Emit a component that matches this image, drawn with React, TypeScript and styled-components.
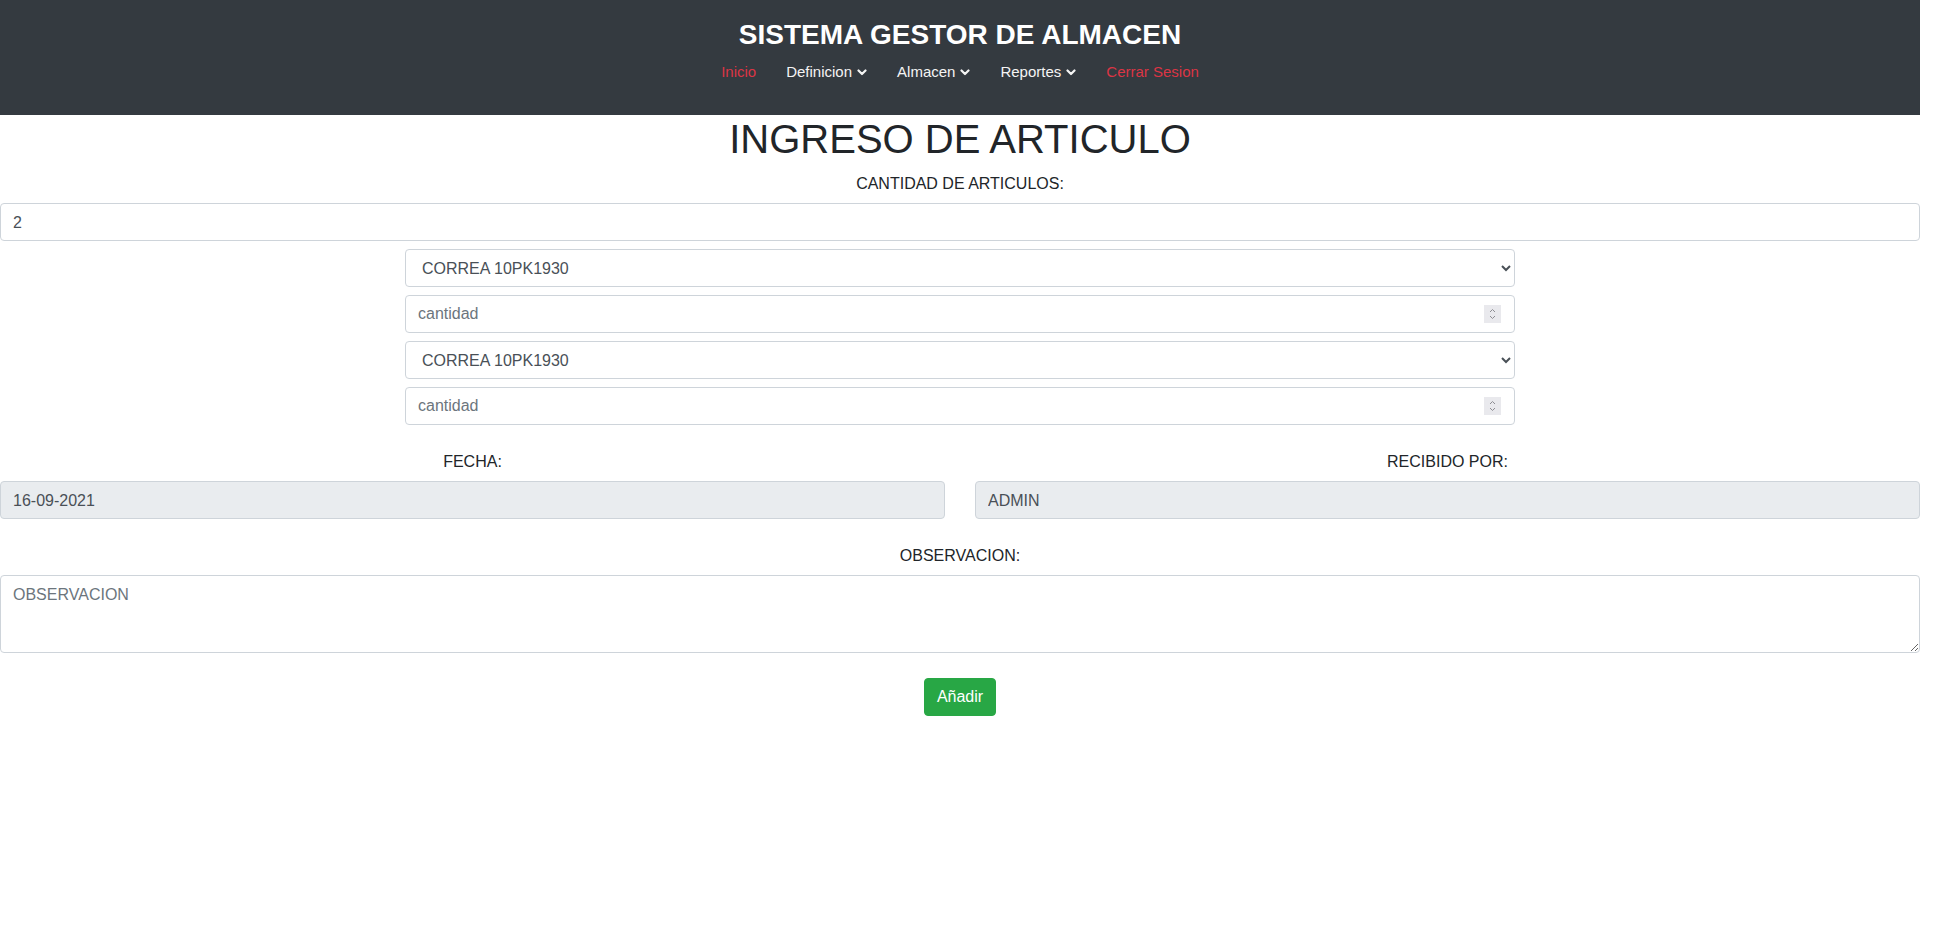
import React from "react";
import styled, { createGlobalStyle } from "styled-components";

const GlobalStyle = createGlobalStyle`
  * { box-sizing: border-box; }
  html, body { margin: 0; padding: 0; background: #fff; }
  body {
    font-family: "Liberation Sans", Arial, sans-serif;
    font-size: 16px;
    line-height: 1.5;
    color: #212529;
  }
  #root { width: 1920px; }
  input[type="number"]::-webkit-inner-spin-button,
  input[type="number"]::-webkit-outer-spin-button {
    -webkit-appearance: none;
    margin: 0;
  }
  input[type="number"] { -moz-appearance: textfield; }
`;

const Header = styled.header`
  height: 115px;
  background: #343a40;
  display: flex;
  flex-direction: column;
  align-items: center;
  padding-top: 18px;
`;

const Brand = styled.h2`
  margin: 0;
  font-size: 28px;
  font-weight: 700;
  line-height: 1.2;
  color: #fff;
`;

const Nav = styled.nav`
  display: flex;
  align-items: center;
  margin-top: 1px;
`;

const NavLink = styled.a<{ $danger?: boolean }>`
  display: flex;
  align-items: center;
  padding: 8px 15px;
  font-size: 15px;
  line-height: 1.5;
  color: ${(p) => (p.$danger ? "#dc3545" : "#f4f4f4")};
  text-decoration: none;
  cursor: pointer;
`;

const Caret = styled.svg`
  margin-left: 5px;
  margin-top: 2px;
  width: 10px;
  height: 7px;
`;

const Main = styled.main`
  display: flex;
  flex-direction: column;
`;

const Title = styled.h1`
  margin: 0 0 8px;
  font-size: 40px;
  font-weight: 400;
  line-height: 1.2;
  text-align: center;
  color: #212529;
`;

const Label = styled.label`
  display: block;
  margin-bottom: 7px;
  padding-top: 1px;
  font-size: 16px;
  line-height: 24px;
  text-align: center;
  color: #212529;
`;

const Field = styled.input`
  display: block;
  width: 100%;
  height: 38px;
  padding: 7px 12px 5px;
  font-family: inherit;
  font-size: 16px;
  line-height: 1.5;
  color: #495057;
  background: #fff;
  border: 1px solid #ced4da;
  border-radius: 4px;
  outline: none;
  &::placeholder { color: #6c757d; opacity: 1; }
  &[readonly] { background: #e9ecef; }
`;

const Items = styled.div`
  width: 1110px;
  margin: 8px auto 0;
  display: flex;
  flex-direction: column;
  gap: 8px;
`;

const Select = styled.select`
  display: block;
  width: 100%;
  height: 38px;
  padding: 6px 12px;
  font-family: inherit;
  font-size: 16px;
  line-height: 1.5;
  color: #495057;
  background: #fff;
  border: 1px solid #ced4da;
  border-radius: 4px;
  outline: none;
`;

const NumberBox = styled.div`
  display: flex;
  align-items: center;
  height: 38px;
  padding: 0 13px 0 12px;
  background: #fff;
  border: 1px solid #ced4da;
  border-radius: 4px;
`;

const NumberInput = styled.input`
  flex: 1;
  min-width: 0;
  border: none;
  outline: none;
  padding: 0;
  font-family: inherit;
  font-size: 16px;
  line-height: 1.5;
  color: #495057;
  background: transparent;
  &::placeholder { color: #6c757d; opacity: 1; }
`;

const Spinner = styled.span`
  display: flex;
  flex-direction: column;
  align-items: center;
  justify-content: center;
  gap: 2px;
  width: 17px;
  height: 18px;
  background: #e9e9ed;
`;

const Row = styled.div`
  display: grid;
  grid-template-columns: 1fr 1fr;
  column-gap: 30px;
  margin-top: 24px;
`;

const Group = styled.div`
  display: flex;
  flex-direction: column;
`;

const ObsGroup = styled.div`
  display: flex;
  flex-direction: column;
  margin-top: 24px;
`;

const TextArea = styled.textarea`
  display: block;
  width: 100%;
  height: 78px;
  padding: 7px 12px 5px;
  font-family: inherit;
  font-size: 16px;
  line-height: 1.5;
  color: #495057;
  background: #fff;
  border: 1px solid #ced4da;
  border-radius: 4px;
  outline: none;
  &::placeholder { color: #6c757d; opacity: 1; }
`;

const Button = styled.button`
  align-self: center;
  margin-top: 25px;
  height: 38px;
  padding: 6px 12px;
  font-family: inherit;
  font-size: 16px;
  line-height: 1.5;
  color: #fff;
  background: #28a745;
  border: 1px solid #28a745;
  border-radius: 4px;
  cursor: pointer;
`;

const ChevronDown = () => (
  <Caret viewBox="0 0 10 7">
    <polyline points="1.5,1.5 5,5 8.5,1.5" fill="none" stroke="#f4f4f4" strokeWidth="2.2" strokeLinecap="round" strokeLinejoin="round" />
  </Caret>
);

const SpinGlyph = () => (
  <Spinner>
    <svg width="7" height="5" viewBox="0 0 7 5">
      <polyline points="1,4 3.5,1.5 6,4" fill="none" stroke="#8e8e93" strokeWidth="1" />
    </svg>
    <svg width="7" height="5" viewBox="0 0 7 5">
      <polyline points="1,1 3.5,3.5 6,1" fill="none" stroke="#8e8e93" strokeWidth="1" />
    </svg>
  </Spinner>
);

const products = ["CORREA 10PK1930", "CORREA 8PK1500", "FILTRO DE ACEITE"];

const ItemSelect = () => (
  <Select defaultValue={products[0]}>
    {products.map((p) => (
      <option key={p} value={p}>
        {p}
      </option>
    ))}
  </Select>
);

const QtyInput = () => (
  <NumberBox>
    <NumberInput type="number" placeholder="cantidad" />
    <SpinGlyph />
  </NumberBox>
);

export default function App() {
  return (
    <>
      <GlobalStyle />
      <Header>
        <Brand>SISTEMA GESTOR DE ALMACEN</Brand>
        <Nav>
          <NavLink $danger>Inicio</NavLink>
          <NavLink>
            Definicion
            <ChevronDown />
          </NavLink>
          <NavLink>
            Almacen
            <ChevronDown />
          </NavLink>
          <NavLink>
            Reportes
            <ChevronDown />
          </NavLink>
          <NavLink $danger>Cerrar Sesion</NavLink>
        </Nav>
      </Header>
      <Main>
        <Title>INGRESO DE ARTICULO</Title>
        <Label>CANTIDAD DE ARTICULOS:</Label>
        <Field type="text" defaultValue="2" />
        <Items>
          <ItemSelect />
          <QtyInput />
          <ItemSelect />
          <QtyInput />
        </Items>
        <Row>
          <Group>
            <Label>FECHA:</Label>
            <Field type="text" readOnly value="16-09-2021" />
          </Group>
          <Group>
            <Label>RECIBIDO POR:</Label>
            <Field type="text" readOnly value="ADMIN" />
          </Group>
        </Row>
        <ObsGroup>
          <Label>OBSERVACION:</Label>
          <TextArea placeholder="OBSERVACION" />
        </ObsGroup>
        <Button type="button">Añadir</Button>
      </Main>
    </>
  );
}
